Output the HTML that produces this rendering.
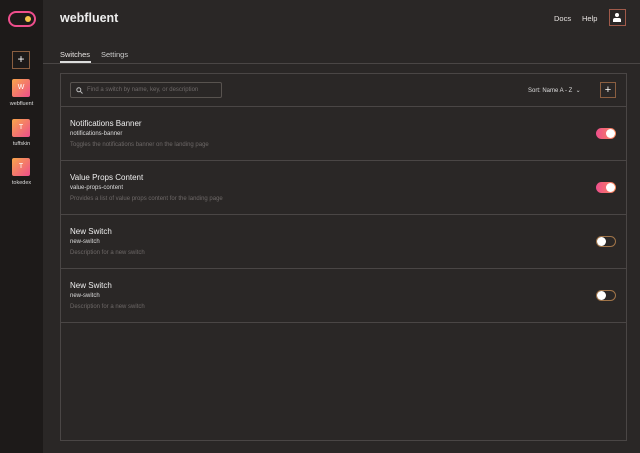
<html><head><style>
body{margin:0;width:640px;height:453px;background:#2a2726;font-family:"Liberation Sans",sans-serif;color:#e8e4e2;position:relative;overflow:hidden}
.sb{position:absolute;left:0;top:0;width:43px;height:453px;background:#1d1a19}
.abs{position:absolute}
.app{position:absolute;left:12px;width:18px;height:18px;border-radius:2px;background:linear-gradient(135deg,#f9a64a,#ee4e8c);color:#fff;font-size:7px;text-align:center;line-height:18px}
.lbl{position:absolute;width:43px;left:0;text-align:center;font-size:5.5px;color:#ddd}
.row{position:absolute;left:61px;width:566px;border-top:1px solid #4a4645}
.t{position:absolute;left:9px;font-size:8px;color:#eee}
.k{position:absolute;left:9px;font-size:6px;color:#ddd}
.d{position:absolute;left:9px;font-size:6px;color:#6d6867}
.tg{position:absolute;left:535px;width:20px;height:11px;border-radius:6px}
.on{background:linear-gradient(90deg,#ee4e8c,#f98a5a)}
.on::after{content:"";position:absolute;right:1px;top:1px;width:9px;height:9px;border-radius:50%;background:#fff}
.off{border:1px solid #a07448;box-sizing:border-box;background:#2a2726}
.off::after{content:"";position:absolute;left:0px;top:0px;width:9px;height:9px;border-radius:50%;background:#fff}
</style></head><body>
<div class="sb">
<div class="abs" style="left:8px;top:11px;width:28px;height:16px;border:2.5px solid #ee4e8c;border-radius:9px;box-sizing:border-box"></div>
<div class="abs" style="left:25px;top:16px;width:6px;height:6px;border-radius:50%;background:#f6c34a"></div>
<div class="abs" style="left:12px;top:51px;width:18px;height:18px;border:1px solid #8a5e40;box-sizing:border-box;color:#fff;font-size:12px;text-align:center;line-height:15px">+</div>
<div class="app" style="top:79px">W</div><div class="lbl" style="top:101px">webfluent</div>
<div class="app" style="top:119px">T</div><div class="lbl" style="top:141px">tuffskin</div>
<div class="app" style="top:158px">T</div><div class="lbl" style="top:180px">tokedex</div>
</div>
<div class="abs" style="left:60px;top:11px;font-size:12.5px;font-weight:bold;color:#eee">webfluent</div>
<div class="abs" style="left:554px;top:14px;font-size:7.5px">Docs</div>
<div class="abs" style="left:582px;top:14px;font-size:7.5px">Help</div>
<div class="abs" style="left:609px;top:9px;width:17px;height:17px;border:1px solid #a05a4a;box-sizing:border-box"><div class="abs" style="left:5px;top:3px;width:4px;height:4px;border-radius:50%;background:#fff"></div><div class="abs" style="left:3px;top:8px;width:8px;height:4px;background:#fff;border-radius:2px 2px 0 0"></div></div>
<div class="abs" style="left:60px;top:50px;font-size:7.5px">Switches</div>
<div class="abs" style="left:101px;top:50px;font-size:7.5px;color:#ccc">Settings</div>
<div class="abs" style="left:60px;top:61px;width:31px;height:2px;background:#ddd"></div>
<div class="abs" style="left:43px;top:63px;width:597px;height:1px;background:#4a4645"></div>
<div class="abs" style="left:60px;top:73px;width:567px;height:368px;border:1px solid #4a4645;box-sizing:border-box"></div>
<div class="abs" style="left:70px;top:82px;width:152px;height:16px;border:1px solid #58534f;border-radius:2px;box-sizing:border-box"><svg class="abs" style="left:5px;top:4px" width="7" height="7" viewBox="0 0 7 7"><circle cx="2.8" cy="2.8" r="2" fill="none" stroke="#bbb" stroke-width="1"/><line x1="4.3" y1="4.3" x2="6.5" y2="6.5" stroke="#bbb" stroke-width="1"/></svg><span class="abs" style="left:16px;top:4px;font-size:6px;color:#6d6867">Find a switch by name, key, or description</span></div>
<div class="abs" style="left:528px;top:87px;font-size:6px;color:#ddd">Sort: Name A - Z &nbsp;⌄</div>
<div class="abs" style="left:600px;top:82px;width:16px;height:16px;border:1px solid #8a5e40;box-sizing:border-box;color:#fff;font-size:11px;text-align:center;line-height:14px">+</div>
<div class="row" style="top:106px;height:54px"><div class="t" style="top:12px">Notifications Banner</div><div class="k" style="top:24px">notifications-banner</div><div class="d" style="top:35px">Toggles the notifications banner on the landing page</div><div class="tg on" style="top:21px"></div></div>
<div class="row" style="top:160px;height:54px"><div class="t" style="top:12px">Value Props Content</div><div class="k" style="top:24px">value-props-content</div><div class="d" style="top:35px">Provides a list of value props content for the landing page</div><div class="tg on" style="top:21px"></div></div>
<div class="row" style="top:214px;height:54px"><div class="t" style="top:12px">New Switch</div><div class="k" style="top:24px">new-switch</div><div class="d" style="top:35px">Description for a new switch</div><div class="tg off" style="top:21px"></div></div>
<div class="row" style="top:268px;height:53px;border-bottom:1px solid #4a4645"><div class="t" style="top:12px">New Switch</div><div class="k" style="top:24px">new-switch</div><div class="d" style="top:35px">Description for a new switch</div><div class="tg off" style="top:21px"></div></div>
</body></html>
